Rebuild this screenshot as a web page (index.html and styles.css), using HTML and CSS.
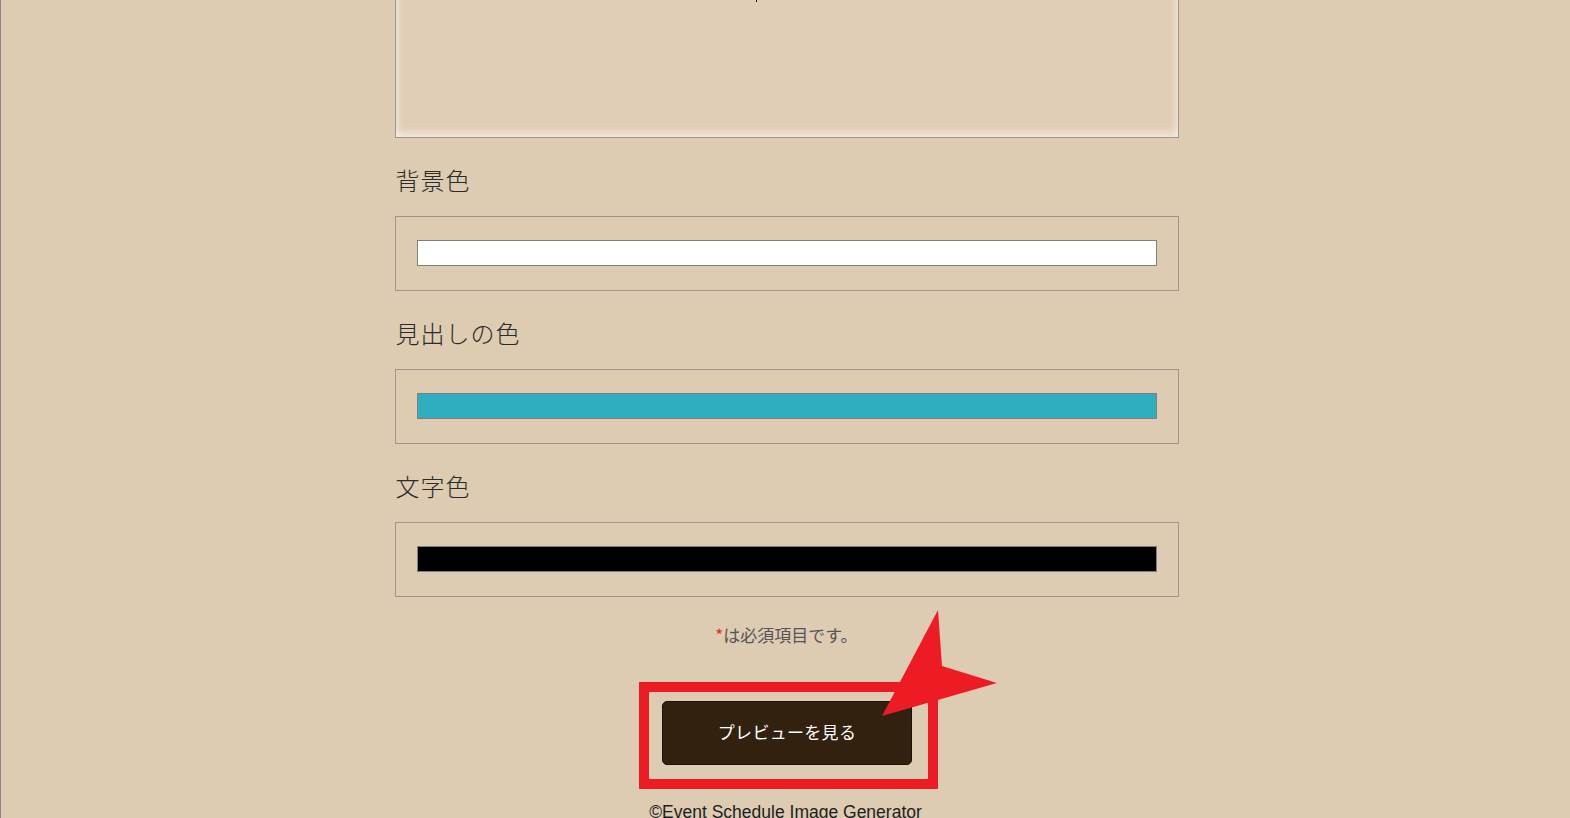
FILE: index.html
```html
<!DOCTYPE html>
<html lang="ja">

<head>
    <meta charset="UTF-8">
    <meta name="viewport" content="width=device-width, initial-scale=1.0">
    <title>Event Schedule Image Generator</title>
    <link rel="stylesheet" href="styles.css">
</head>

<body>
    <div class="page">
        <div class="form">
            <div class="memo">
                <span class="caret"></span>
            </div>

            <div class="field">
                <label class="label" for="bg-color">背景色</label>
                <div class="box">
                    <input type="text" id="bg-color" class="swatch white" readonly>
                </div>
            </div>

            <div class="field">
                <label class="label" for="head-color">見出しの色</label>
                <div class="box">
                    <input type="text" id="head-color" class="swatch teal" readonly>
                </div>
            </div>

            <div class="field">
                <label class="label" for="text-color">文字色</label>
                <div class="box">
                    <input type="text" id="text-color" class="swatch black" readonly>
                </div>
            </div>

            <p class="note"><span class="req">*</span>は必須項目です。</p>

            <div class="submit">
                <button type="button" class="preview">プレビューを見る</button>
                <span class="mark"></span>
                <svg class="arrow" width="120" height="112" viewBox="0 0 120 112">
                    <polygon points="57,2 61,58 116,75 1,108" fill="#ed1c24" />
                </svg>
            </div>
        </div>

        <footer class="footer">©Event Schedule Image Generator</footer>
    </div>
</body>

</html>
```

FILE: styles.css
```css
* {
    padding: 0;
    margin: 0;
    box-sizing: border-box;
}

body {
    background: #ddcbb2;
    font-family: "Noto Sans CJK JP", "Noto Sans", sans-serif;
    color: #333;
    overflow: hidden;
}

.page {
    min-height: 100vh;
    border-left: 1px solid #8c8680;
    display: flex;
    flex-direction: column;
    align-items: center;
}

.form {
    width: 784px;
    margin-left: 2px;
}

.memo {
    position: relative;
    height: 160px;
    margin-top: -22px;
    background: #e0ceb6;
    border: 1px solid #9f958a;
    box-shadow: inset 0 -10px 10px -6px rgba(255, 255, 255, 0.55), inset 6px 0 6px -4px rgba(255, 255, 255, 0.5), inset -6px 0 6px -4px rgba(255, 255, 255, 0.5);
}

.caret {
    position: absolute;
    left: 360px;
    top: 21px;
    width: 1px;
    height: 2px;
    background: #000;
}

.label {
    display: block;
    margin: 24px 0 18px 1px;
    height: 36px;
    line-height: 36px;
    font-size: 24px;
    font-weight: 300;
    letter-spacing: 1px;
    color: #2b2b2b;
}

.box {
    border: 1px solid #9f958a;
    padding: 23px 21px;
    height: 75px;
}

.swatch {
    display: block;
    width: 100%;
    height: 26px;
    border: 1px solid #7f7f7f;
    outline: none;
}

.white {
    background: #fff;
}

.teal {
    background: #2eaebe;
}

.black {
    background: #000;
}

.note {
    margin-top: 26px;
    text-align: center;
    font-size: 17px;
    line-height: 24px;
    color: #555;
}

.req {
    color: #e0302a;
}

.submit {
    position: relative;
    display: flex;
    justify-content: center;
    margin-top: 54px;
}

.preview {
    width: 250px;
    height: 64px;
    margin-left: 1px;
    padding-bottom: 3px;
    border: 1px solid #1a1108;
    border-radius: 5px;
    background: #33210f;
    color: #fff;
    font-family: "Noto Sans CJK JP", sans-serif;
    font-size: 17px;
    letter-spacing: 0.3px;
}

.mark {
    position: absolute;
    left: 244px;
    top: -19px;
    width: 299px;
    height: 107px;
    border: 10px solid #ed1c24;
}

.arrow {
    position: absolute;
    left: 486px;
    top: -93px;
}

.footer {
    margin-top: 37px;
    font-family: "Liberation Sans", Arial, sans-serif;
    font-size: 17.5px;
    line-height: 20px;
    color: #1e1e1e;
}
```
